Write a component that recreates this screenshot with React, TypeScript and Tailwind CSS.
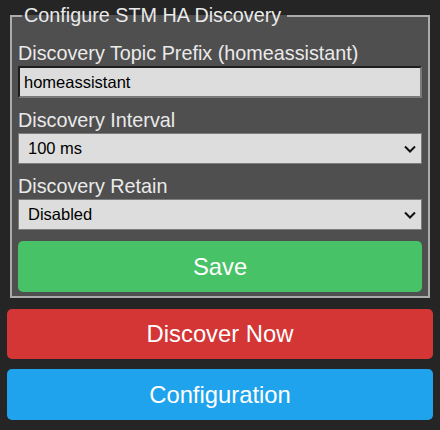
import { useState } from "react";

function Chevron() {
    return <svg className="pointer-events-none absolute right-[6px] top-[12px]" width="12" height="8" viewBox="0 0 12 8" fill="none">
        <path d="M1 1.5L6 6.5L11 1.5" stroke="#111" strokeWidth="2" />
    </svg>
}

export default function App() {
    const [prefix, setPrefix] = useState("homeassistant");
    const [interval, setInterval] = useState("100");
    const [retain, setRetain] = useState("0");

    return <div className="w-[440px] h-[430px] bg-[#252525] px-[7px] pt-[4px] font-['Liberation_Sans',Arial,sans-serif] text-[#eaeaea]">
        <fieldset className="mx-[3px] border-2 border-[#ababab] bg-[#4f4f4f] px-[6px] pt-[15px] pb-[4px]">
            <legend className="ml-[4px] pl-[2px] pr-[6px] text-[19.8px] leading-[23px]">Configure STM HA Discovery</legend>

            <label className="block h-[24px] text-[19.8px] leading-[23px]">Discovery Topic Prefix (homeassistant)</label>
            <input type="text" value={prefix} onChange={(e) => setPrefix(e.target.value)}
                className="block w-full h-[32px] border-2 border-t-[#1e1e1e] border-l-[#1e1e1e] border-r-[#7a7a7a] border-b-[#7a7a7a] bg-[#dddddd] px-[4px] text-[16.5px] text-black outline-none" />

            <label className="block mt-[11px] h-[24px] text-[19.8px] leading-[23px]">Discovery Interval</label>
            <div className="relative">
                <select value={interval} onChange={(e) => setInterval(e.target.value)}
                    className="block w-full h-[31px] appearance-none border border-[#7d7d7d] bg-[#dddddd] pl-[9px] text-[16.5px] text-black outline-none">
                    <option value="100">100 ms</option>
                    <option value="500">500 ms</option>
                    <option value="1000">1000 ms</option>
                </select>
                <Chevron />
            </div>

            <label className="block mt-[11px] h-[24px] text-[19.8px] leading-[23px]">Discovery Retain</label>
            <div className="relative">
                <select value={retain} onChange={(e) => setRetain(e.target.value)}
                    className="block w-full h-[31px] appearance-none border border-[#7d7d7d] bg-[#dddddd] pl-[9px] text-[16.5px] text-black outline-none">
                    <option value="0">Disabled</option>
                    <option value="1">Enabled</option>
                </select>
                <Chevron />
            </div>

            <button className="mt-[11px] block w-full h-[51px] rounded-[5px] bg-[#47c266] text-[23.8px] text-white">Save</button>
        </fieldset>

        <button className="mt-[11px] block w-full h-[50px] rounded-[5px] bg-[#d43535] text-[23.8px] text-white">Discover Now</button>
        <button className="mt-[10px] block w-full h-[51px] rounded-[5px] bg-[#1fa3ec] text-[23.8px] text-white">Configuration</button>
    </div>
}
